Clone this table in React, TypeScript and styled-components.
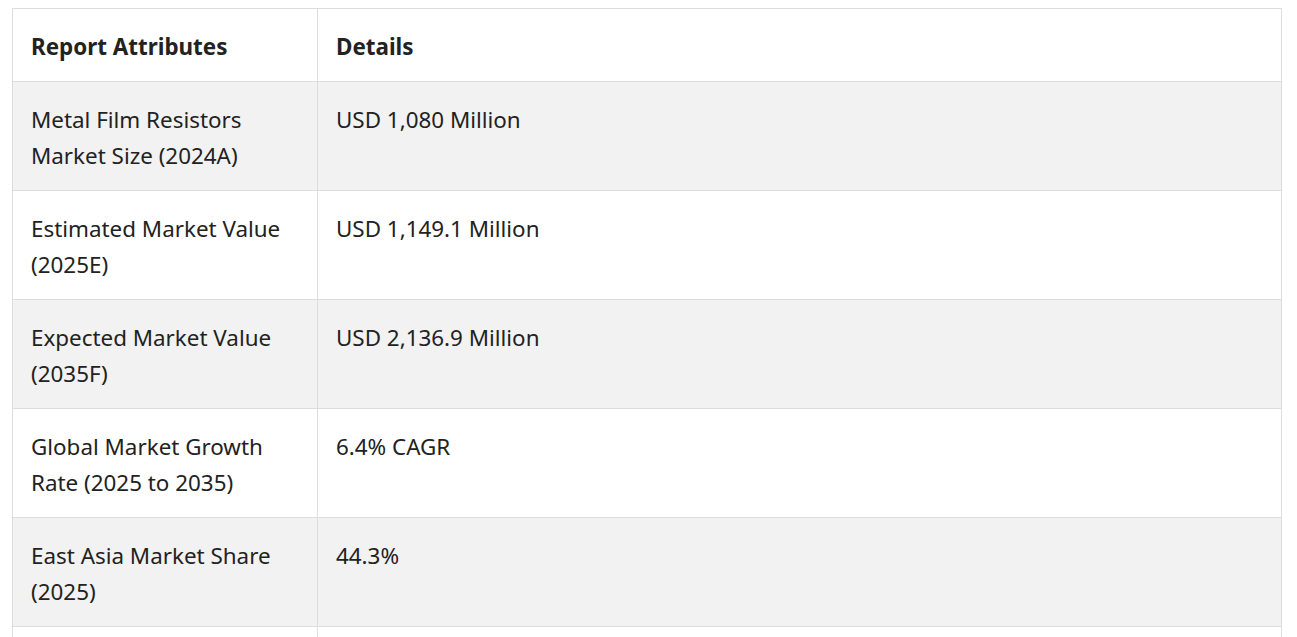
import React from 'react';
import styled, { createGlobalStyle } from 'styled-components';

const rows: [string, string][] = [
    ['Metal Film Resistors Market Size (2024A)', 'USD 1,080 Million'],
    ['Estimated Market Value (2025E)', 'USD 1,149.1 Million'],
    ['Expected Market Value (2035F)', 'USD 2,136.9 Million'],
    ['Global Market Growth Rate (2025 to 2035)', '6.4% CAGR'],
    ['East Asia Market Share (2025)', '44.3%'],
    ['\u00a0', '\u00a0'],
];

const App = () => {
    return (
        <>
            <GlobalStyle />
            <Page>
                <Table>
                    <colgroup>
                        <col style={{ width: 305 }} />
                        <col />
                    </colgroup>
                    <thead>
                        <tr>
                            <HeadCell>Report Attributes</HeadCell>
                            <HeadCell>Details</HeadCell>
                        </tr>
                    </thead>
                    <tbody>
                        {rows.map(([label, value], i) => (
                            <Row key={i} $shaded={i % 2 === 0}>
                                <Cell>{label}</Cell>
                                <Cell>{value}</Cell>
                            </Row>
                        ))}
                    </tbody>
                </Table>
            </Page>
        </>
    );
};

const GlobalStyle = createGlobalStyle`
    body {
        margin: 0;
        background: #ffffff;
        font-family: 'Noto Sans', 'Open Sans', sans-serif;
        color: #222222;
    }
`;

const Page = styled.div`
    padding: 8px 15px 0 12px;
    height: 637px;
    overflow: hidden;
    box-sizing: border-box;
`;

const Table = styled.table`
    width: 1270px;
    border-collapse: collapse;
    table-layout: fixed;
    font-size: 22.4px;
    line-height: 36px;
`;

const HeadCell = styled.th`
    text-align: left;
    font-weight: 700;
    padding: 20px 18px 16px;
    border: 1px solid #dddddd;
    vertical-align: top;
`;

const Row = styled.tr<{ $shaded: boolean }>`
    background: ${(p) => (p.$shaded ? '#f2f2f2' : '#ffffff')};
`;

const Cell = styled.td`
    padding: 20px 18px 16px;
    border: 1px solid #dddddd;
    vertical-align: top;
`;

export default App;
